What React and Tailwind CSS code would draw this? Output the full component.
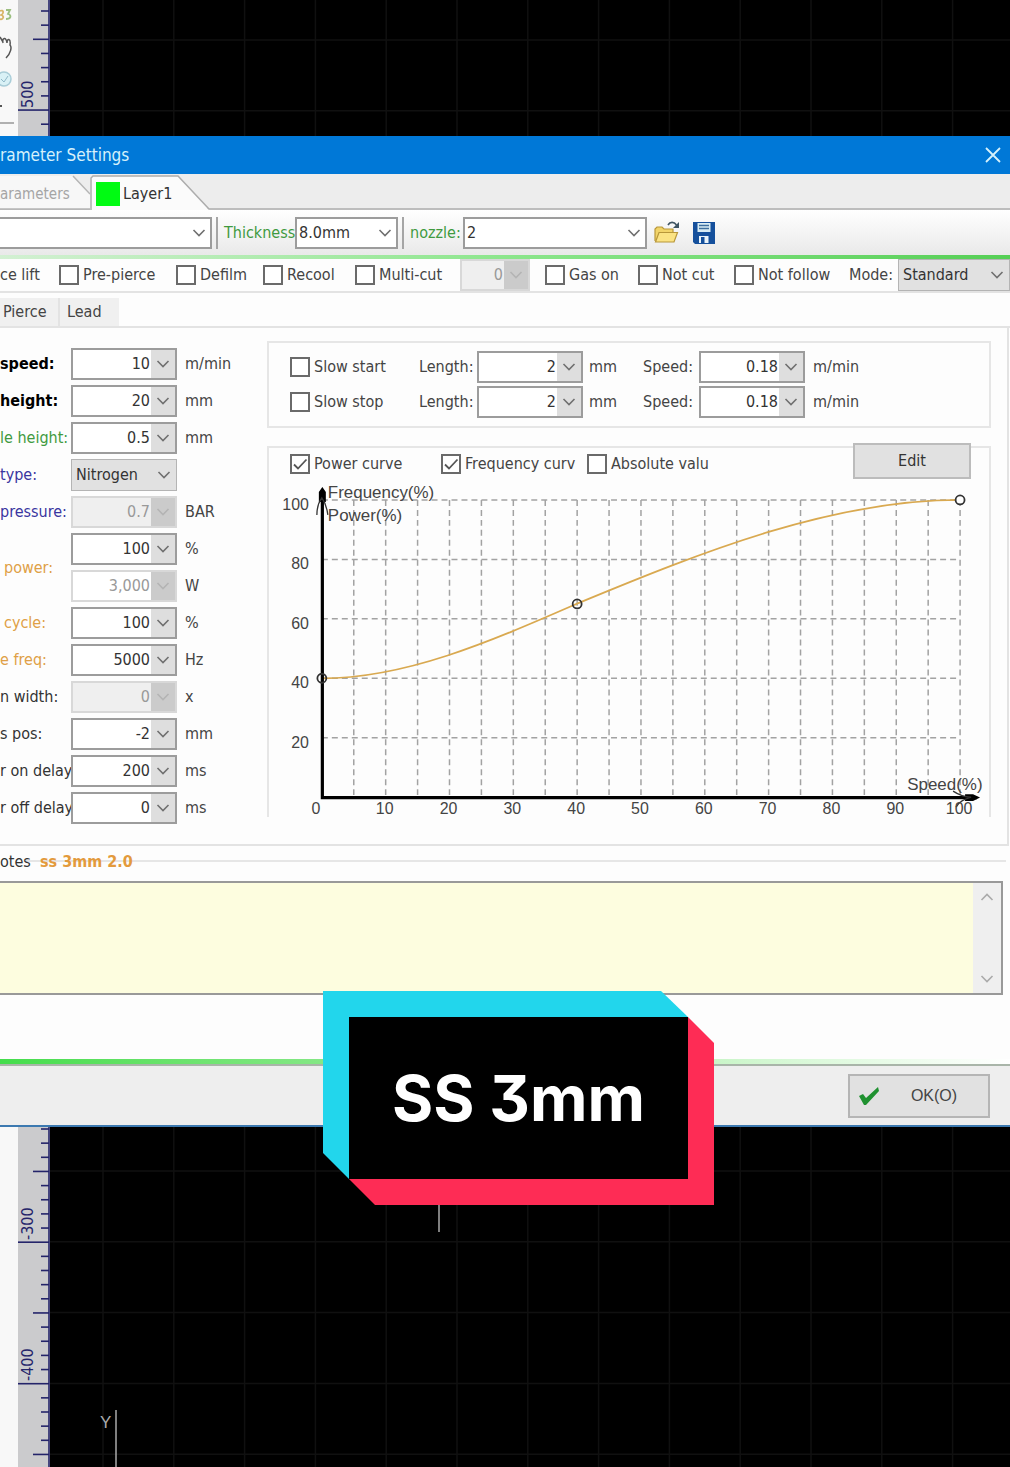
import { useState } from 'react'

const numberRows = [
  { id: 'speed', label: 'speed:', tone: 'font-bold text-black', value: '10', unit: 'm/min' },
  { id: 'height', label: 'height:', tone: 'font-bold text-black', value: '20', unit: 'mm' },
  { id: 'nozzle-height', label: 'le height:', tone: 'text-[#3f9a3f]', value: '0.5', unit: 'mm' },
  { id: 'gas', label: 'type:', tone: 'text-[#3a35a0]', options: ['Nitrogen'] },
  { id: 'pressure', label: 'pressure:', tone: 'text-[#3a35a0]', value: '0.7', unit: 'BAR', disabled: true },
]

const laserRows = [
  { id: 'cycle', label: 'cycle:', tone: 'pl-1 text-[#dfa046]', value: '100', unit: '%' },
  { id: 'freq', label: 'e freq:', tone: 'text-[#dfa046]', value: '5000', unit: 'Hz' },
  { id: 'width', label: 'n width:', tone: 'text-[#333]', value: '0', unit: 'x', disabled: true },
  { id: 'focus', label: 's pos:', tone: 'text-[#333]', value: '-2', unit: 'mm' },
  { id: 'on-delay', label: 'r on delay', tone: 'text-[#333]', value: '200', unit: 'ms' },
  { id: 'off-delay', label: 'r off delay', tone: 'text-[#333]', value: '0', unit: 'ms' },
]

function Chevron({ className = '', up = false }) {
  return (
    <svg viewBox="0 0 14 8" className={`h-2 w-3.5 ${className}`} fill="none" stroke="currentColor" strokeWidth="1.6" aria-hidden="true">
      <path d={up ? 'M1.5 7 7 1.5 12.5 7' : 'M1.5 1 7 6.5 12.5 1'} />
    </svg>
  )
}

function Combo({ id, value, disabled, plain, width = 'w-[106px]', label }) {
  const [text, setText] = useState(value)

  return (
    <div className={`flex h-8 shrink-0 border-2 ${width} ${disabled ? 'border-[#d8d8d8] text-[#999]' : 'border-[#9c9c9c] text-[#333]'}`}>
      <input
        id={id}
        aria-label={label}
        type="text"
        value={text}
        disabled={disabled}
        onChange={(e) => setText(e.target.value)}
        className={`min-w-0 flex-1 pr-px text-right ${disabled && !plain ? 'bg-[#efefef]' : 'bg-white'}`}
      />
      <button
        type="button"
        disabled={disabled}
        aria-label="Choose value"
        className={`flex w-6 items-center justify-center ${disabled ? 'bg-[#cbcbcb] text-[#b4b4b4]' : 'bg-[#dedede] text-[#707070]'}`}
      >
        <Chevron />
      </button>
    </div>
  )
}

function Select({ id, options, width, label, flat }) {
  return (
    <div className={`relative h-8 shrink-0 ${width}`}>
      <select
        id={id}
        aria-label={label}
        className={`h-full w-full appearance-none text-[#333] ${flat ? 'border border-[#b4b4b4] bg-[#e1e1e1] pl-1' : 'border-2 border-[#9c9c9c] bg-white pl-0.5'}`}
      >
        {options.map((option) => (
          <option key={option}>{option}</option>
        ))}
      </select>
      <Chevron className="pointer-events-none absolute right-1.5 top-3 text-[#707070]" />
    </div>
  )
}

function Check({ label, width = '', checked = false }) {
  const [on, setOn] = useState(checked)

  return (
    <label className={`flex shrink-0 items-center gap-1 whitespace-nowrap ${width}`}>
      <span className="relative h-5 w-5 shrink-0">
        <input
          type="checkbox"
          checked={on}
          onChange={() => setOn(!on)}
          className="block h-5 w-5 appearance-none border-2 border-[#6a6a6a] bg-white"
        />
        {on && (
          <svg viewBox="0 0 20 20" className="pointer-events-none absolute inset-0 h-5 w-5" fill="none" stroke="#555" strokeWidth="1.8">
            <path d="M4 10.5 8 14.5 16.5 5.5" />
          </svg>
        )}
      </span>
      <span>{label}</span>
    </label>
  )
}

function ParameterRow({ id, label, tone, value, unit, disabled, options }) {
  return (
    <div className="flex h-8 items-center">
      <label htmlFor={id} className={`w-[71px] shrink-0 whitespace-nowrap ${tone}`}>{label}</label>
      {options
        ? <Select id={id} options={options} width="w-[106px]" flat />
        : <Combo id={id} value={value} disabled={disabled} />}
      <span className="pl-2">{unit}</span>
    </div>
  )
}

function RampRow({ name }) {
  return (
    <div className="flex h-8 items-center">
      <Check label={name} width="w-[129px]" />
      <span className="w-[58px]">Length:</span>
      <Combo value="2" label={`${name} length`} />
      <span className="w-[60px] pl-1.5">mm</span>
      <span className="w-14">Speed:</span>
      <Combo value="0.18" label={`${name} speed`} />
      <span className="pl-2">m/min</span>
    </div>
  )
}

// chart scale: percent -> svg units
const px = (v) => 53 + v * 6.4
const py = (v) => 318 - v * 2.98
const steps = (from, to, by) => Array.from({ length: (to - from) / by + 1 }, (_, i) => from + i * by)

function PowerChart() {
  return (
    <svg viewBox="0 0 722 338" className="block w-full font-['Liberation_Sans',sans-serif]" role="img" aria-label="Power curve">
      <g stroke="#a2a2a2" strokeWidth="1.5" strokeDasharray="6 4">
        {steps(5, 100, 5).map((v) => (
          <line key={v} x1={px(v)} x2={px(v)} y1={py(100)} y2={py(0)} />
        ))}
        {steps(20, 100, 20).map((v) => (
          <line key={v} x1={px(0)} x2={px(100)} y1={py(v)} y2={py(v)} />
        ))}
      </g>
      <path d="M53 199C138 199 224 161 309 124C437 71 565 20 693 20" fill="none" stroke="#d9a950" strokeWidth="1.8" />
      <path d="M53.5 10V318.5H710" fill="none" stroke="#000" strokeWidth="3.2" />
      <path d="M53.5 7 57 12V22H50V12ZM713 318.5 706 322H698V315H706Z" fill="#000" />
      <path d="M48 35C48 27 50 22 53 18C56 22 58 27 59 35M686 312C692 316 698 318 704 318C698 320 692 322 689 328" fill="none" stroke="#333" strokeWidth="1.3" />
      <g fill="none" stroke="#333" strokeWidth="1.8">
        <circle cx={px(0)} cy={py(40)} r="4.5" />
        <circle cx={px(40)} cy={py(65)} r="4.5" />
        <circle cx={px(100)} cy={py(100)} r="4.5" fill="#fff" />
      </g>
      <g fill="#444" fontSize="16">
        {steps(20, 100, 20).map((v) => (
          <text key={v} x="40" y={py(v) + 10} textAnchor="end">{v}</text>
        ))}
        {steps(0, 100, 10).map((v) => (
          <text key={v} x={v ? px(v) - 1 : 47} y="335" textAnchor="middle">{v}</text>
        ))}
      </g>
      <g fill="#444" fontSize="17">
        <text x="59" y="18">Frequency(%)</text>
        <text x="59" y="41">Power(%)</text>
        <text x="640" y="311">Speed(%)</text>
      </g>
    </svg>
  )
}

function OpenIcon() {
  return (
    <svg viewBox="0 0 28 26" className="h-[26px] w-7" aria-hidden="true">
      <path d="M2 21V9L4 7H9L11 9H20V13" fill="#f2d469" stroke="#b8973a" strokeWidth="1.2" />
      <path d="M2.500 22 6 12.500H24.500L21 22Z" fill="#fbe383" stroke="#b8973a" strokeWidth="1.2" />
      <path d="M15 5C17 1.500 21 1.500 23.500 5" fill="none" stroke="#3f5563" strokeWidth="1.6" />
      <path d="M26 2V8H20Z" fill="#3f5563" />
    </svg>
  )
}

function SaveIcon() {
  return (
    <svg viewBox="0 0 22 22" className="h-[22px] w-[22px]" aria-hidden="true">
      <path d="M0 0H22V22H2L0 20Z" fill="#15509c" />
      <path d="M4.500 1H17.500V10H4.500Z" fill="#d8ecf4" />
      <path d="M6 3.500H16M6 6.500H16" stroke="#3d6f9f" strokeWidth="1.3" />
      <path d="M6 14H15.500V21H6Z" fill="#eaf4fa" />
      <path d="M8 15H11.500V21H8Z" fill="#15509c" />
    </svg>
  )
}

function Ruler({ first, phase, labels }) {
  return (
    <svg className="h-auto w-8 shrink-0 self-stretch bg-[#cbcbcd] font-['DejaVu_Sans_Condensed',sans-serif]" aria-hidden="true">
      <g stroke="#24246a" strokeWidth="1.6">
        {steps(0, 60, 1).map((i) => {
          const kind = (i + phase) % 10
          const y = first + i * 14.15
          return <line key={i} x1={kind === 0 ? 0 : kind === 5 ? 15 : 23} x2="31" y1={y} y2={y} />
        })}
        <line x1="31" x2="31" y1="0" y2="900" />
      </g>
      {labels.map(({ text, y }) => (
        <text key={text} transform={`translate(15 ${y}) rotate(-90)`} fill="#24246a" fontSize="16">{text}</text>
      ))}
    </svg>
  )
}

function Canvas({ firstRow, children }) {
  return (
    <svg className="h-auto min-w-0 flex-1 self-stretch bg-black" aria-hidden="true">
      <g stroke="#101010" strokeWidth="1.5">
        {steps(0, 30, 1).map((i) => (
          <line key={`v${i}`} x1={53 + i * 70.8} x2={53 + i * 70.8} y1="0" y2="900" />
        ))}
        {steps(0, 12, 1).map((i) => (
          <line key={`h${i}`} x1="0" x2="2400" y1={firstRow + i * 70.8} y2={firstRow + i * 70.8} />
        ))}
      </g>
      {children}
    </svg>
  )
}

function Caption() {
  return (
    <div className="absolute left-[323px] top-[991px] h-[214px] w-[391px]">
      <svg viewBox="0 0 391 214" className="absolute inset-0 h-full w-full" aria-hidden="true">
        <path d="M0 0H338L365 26V188H26L0 162Z" fill="#22d6ec" />
        <path d="M365 26 391 52V214H52L26 188H365Z" fill="#fe2c55" />
        <path d="M26 26H365V188H26Z" fill="#000" />
      </svg>
      <p className="relative flex h-full items-center justify-center font-['Inter',sans-serif] text-[63px] font-bold text-white [font-feature-settings:'cv09']">
        SS 3mm
      </p>
    </div>
  )
}

function App() {
  return (
    <main className="relative flex min-h-screen flex-col overflow-hidden bg-black font-['DejaVu_Sans_Condensed','DejaVu_Sans',sans-serif] text-base leading-5 text-[#444]">
      <div className="flex h-[136px] shrink-0">
        <svg viewBox="0 0 18 136" className="h-full w-[18px] shrink-0 bg-[#f8f8f8]" fill="none" aria-hidden="true">
          <path d="M0 11C4 9 4 14 1 15C5 16 3 20 0 19" stroke="#d8b568" strokeWidth="1.8" />
          <path d="M6 10H10L8 14C12 15 11 19 6 19" stroke="#9bbf80" strokeWidth="1.8" />
          <path d="M0 37 3 42M3 43C2 38 6 36 7 43C7 38 11 38 10 45C12 47 11 53 6 58" stroke="#555" strokeWidth="1.5" />
          <circle cx="4" cy="79" r="7" fill="#d9f1f6" stroke="#a9cdd8" strokeWidth="1.5" />
          <path d="M1 79 4 82 8 76" stroke="#8fb8c8" />
          <path d="M0 106H2" stroke="#555" strokeWidth="2" />
          <path d="M0 123H14" stroke="#999" strokeWidth="1.5" />
        </svg>
        <Ruler first={11} phase={3} labels={[{ text: '500', y: 108 }]} />
        <Canvas firstRow={40} />
      </div>

      <section className="shrink-0 border-b-2 border-[#3c79b0] bg-[#fdfdfd]">
        <header className="flex h-[38px] items-center justify-between bg-[#0078d7] pr-2 text-[#d5f1fb]">
          <h1 className="text-[17px]">rameter Settings</h1>
          <button type="button" aria-label="Close" className="p-px">
            <svg viewBox="0 0 16 16" className="h-4 w-4" stroke="currentColor" strokeWidth="1.8">
              <path d="M1 1 15 15M15 1 1 15" />
            </svg>
          </button>
        </header>

        <nav className="flex h-9 border-b-2 border-[#bdbdbd] bg-[#ededed]">
          <button type="button" className="relative h-9 w-[90px] pt-1 text-left text-[15px] text-[#a5a5a5]">
            <svg viewBox="0 0 90 36" className="absolute inset-0 h-full w-full" aria-hidden="true">
              <path d="M0 2H73L90 20V35H0Z" fill="#f7f7f7" />
              <path d="M73 2 90 20M0 35H90" fill="none" stroke="#b5b5b5" strokeWidth="1.5" />
            </svg>
            <span className="relative">arameters</span>
          </button>
          <button type="button" className="relative flex h-9 w-[120px] items-center gap-[3px] pl-1.5 pt-1 text-[#333]">
            <svg viewBox="0 0 120 36" className="absolute inset-0 h-full w-full" aria-hidden="true">
              <path d="M0 36V4L2 2H88L119 36Z" fill="#fbfbfb" />
              <path d="M1 36V4L3 2H88L119 35" fill="none" stroke="#adadad" strokeWidth="1.5" />
            </svg>
            <span className="relative h-6 w-6 bg-[#00fb12]" />
            <span className="relative">Layer1</span>
          </button>
        </nav>

        <div className="flex h-[45px] items-center bg-linear-to-b from-white to-[#e9e9e9]">
          <div className="-ml-1 flex border-r-2 border-[#a5a5a5] pr-1">
            <Select options={['']} label="Material" width="w-[216px]" />
          </div>
          <label htmlFor="thickness" className="w-[77px] pl-1.5 text-[#3f9a3f]">Thickness</label>
          <div className="flex border-r-2 border-[#a5a5a5] pr-1">
            <Select id="thickness" options={['8.0mm']} width="w-[103px]" />
          </div>
          <label htmlFor="nozzle" className="w-[59px] pl-1.5 text-[#3f9a3f]">nozzle:</label>
          <Select id="nozzle" options={['2']} width="w-[184px]" />
          <button type="button" aria-label="Open" className="ml-1.5"><OpenIcon /></button>
          <button type="button" aria-label="Save" className="ml-3"><SaveIcon /></button>
        </div>
        <div className="h-1 bg-linear-to-r from-[#d3f0d3] via-[#8ce68c] to-[#55cf55]" />

        <div className="flex h-[34px] items-center border-b-2 border-[#e3e3e3]">
          <span className="w-[59px] shrink-0">ce lift</span>
          <Check label="Pre-pierce" width="w-[117px]" />
          <Check label="Defilm" width="w-[87px]" />
          <Check label="Recool" width="w-[92px]" />
          <Check label="Multi-cut" width="w-[105px]" />
          <Combo value="0" label="Multi-cut count" width="w-[70px]" disabled />
          <div className="flex pl-[15px]">
            <Check label="Gas on" width="w-[93px]" />
            <Check label="Not cut" width="w-24" />
            <Check label="Not follow" width="w-[115px]" />
          </div>
          <label htmlFor="mode" className="w-[49px] shrink-0">Mode:</label>
          <Select id="mode" options={['Standard']} width="w-28" flat />
        </div>

        <nav className="flex border-b-2 border-[#e3e3e3] pt-[5px]">
          <button type="button" className="h-7 w-[60px] border-r-2 border-[#e3e3e3] bg-[#f0f0f0] pl-[3px] text-left">Pierce</button>
          <button type="button" className="h-7 w-[59px] bg-[#f0f0f0] pl-[7px] text-left">Lead</button>
        </nav>

        <div className="mr-px flex border-b-2 border-r-2 border-[#e3e3e3] pb-5 pt-[13px]">
          <div className="flex w-[267px] shrink-0 flex-col gap-[5px] pt-[7px]">
            {numberRows.map((row) => (
              <ParameterRow key={row.id} {...row} />
            ))}
            <div className="flex items-center">
              <label htmlFor="power" className="w-[71px] pl-1 text-[#dfa046]">power:</label>
              <div className="flex flex-col gap-[5px]">
                <div className="flex items-center">
                  <Combo id="power" value="100" />
                  <span className="pl-2">%</span>
                </div>
                <div className="flex items-center">
                  <Combo value="3,000" label="Power in watts" disabled plain />
                  <span className="pl-2">W</span>
                </div>
              </div>
            </div>
            {laserRows.map((row) => (
              <ParameterRow key={row.id} {...row} />
            ))}
          </div>

          <div className="mr-4 flex min-w-0 flex-1 flex-col gap-[18px]">
            <div className="flex flex-col gap-[3px] border-2 border-[#e6e6e6] py-2 pl-[21px]">
              <RampRow name="Slow start" />
              <RampRow name="Slow stop" />
            </div>
            <div className="border-x-2 border-t-2 border-[#e6e6e6]">
              <div className="flex h-8 items-center pl-[21px]">
                <Check label="Power curve" width="w-[151px]" checked />
                <Check label="Frequency curv" width="w-[146px]" checked />
                <Check label="Absolute valu" />
                <button type="button" className="-mt-1.5 ml-auto mr-[18px] h-9 w-[118px] border-2 border-[#bcbcbc] bg-[#e1e1e1] text-[#333]">Edit</button>
              </div>
              <PowerChart />
            </div>
          </div>
        </div>

        <div className="relative mb-[5px] mt-0.5 flex h-7 items-center gap-4">
          <span className="absolute left-[25px] right-1 top-3 h-0.5 bg-[#e6e6e6]" />
          <label htmlFor="notes" className="relative w-6 text-[#333]">otes</label>
          <strong className="relative text-[#e39a3c]">ss 3mm 2.0</strong>
        </div>
        <div className="mr-[7px] flex h-[114px] border-y-2 border-r-2 border-[#999] bg-[#fdfddf]">
          <textarea id="notes" className="min-w-0 flex-1 resize-none bg-[#fdfddf]" />
          <div className="flex w-7 flex-col items-center justify-between bg-[#efefef] py-2.5 text-[#aaa]">
            <Chevron up />
            <Chevron />
          </div>
        </div>

        <div className="mt-16 h-[5px] bg-linear-to-r from-[#43dd4b] via-[#a0eda0] to-white" />
        <footer className="flex h-[61px] items-center justify-end border-t-2 border-[#a9b5a9] bg-[#eee] pr-5">
          <button type="button" className="flex h-11 w-[142px] items-center border-2 border-[#b5b5b5] bg-[#e1e1e1] pl-2 text-[#444]">
            <svg viewBox="0 0 22 20" className="h-5 w-[22px]" aria-hidden="true">
              <path d="M1 10 5 8 8 12 20 1 21 5 8 19 6 19Z" fill="#1f9130" />
            </svg>
            <span className="flex-1 text-center font-['Liberation_Sans',sans-serif]">OK(O)</span>
          </button>
        </footer>
      </section>

      <div className="flex min-h-[340px] flex-1">
        <div className="w-[18px] shrink-0 bg-[#f8f8f8]" />
        <Ruler first={2} phase={2} labels={[{ text: '-300', y: 113 }, { text: '-400', y: 254 }]} />
        <Canvas firstRow={44}>
          <path d="M389 0V105" stroke="#aaa" strokeWidth="1.5" />
          <path d="M66 283V900" stroke="#aaa" strokeWidth="1.5" />
          <text x="50" y="301" fill="#aaa" fontSize="17" className="font-['Liberation_Sans',sans-serif]">Y</text>
        </Canvas>
      </div>

      <Caption />
    </main>
  )
}

export default App
